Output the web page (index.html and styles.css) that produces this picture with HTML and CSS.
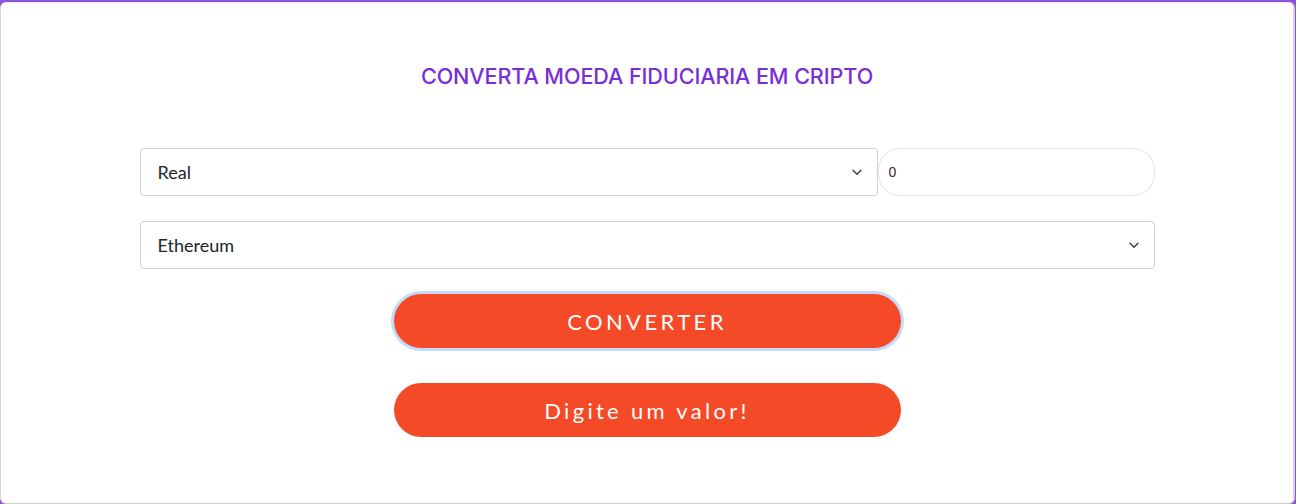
FILE: index.html
```html
<!DOCTYPE html>
<html lang="pt-BR">
<head>
<meta charset="utf-8">
<title>Conversor</title>
<link rel="stylesheet" href="styles.css">
</head>
<body>
<main class="card">
  <h1 class="title">CONVERTA MOEDA FIDUCIARIA EM CRIPTO</h1>
  <form class="form">
    <div class="row">
      <div class="select-wrap select-wrap--fiat">
        <select class="select"><option>Real</option></select>
        <svg class="chevron" viewBox="0 0 16 16" width="14" height="14"><path d="M3.5 6l4.5 4.5L12.5 6" fill="none" stroke="#343a40" stroke-width="1.6" stroke-linecap="round" stroke-linejoin="round"/></svg>
      </div>
      <input class="amount" type="text" value="0">
    </div>
    <div class="row">
      <div class="select-wrap">
        <select class="select"><option>Ethereum</option></select>
        <svg class="chevron" viewBox="0 0 16 16" width="14" height="14"><path d="M3.5 6l4.5 4.5L12.5 6" fill="none" stroke="#343a40" stroke-width="1.6" stroke-linecap="round" stroke-linejoin="round"/></svg>
      </div>
    </div>
    <button type="button" class="btn btn--focus">CONVERTER</button>
    <div class="btn btn--result">Digite um valor!</div>
  </form>
</main>
</body>
</html>
```
FILE: styles.css
```css
* { box-sizing: border-box; }
html, body { margin: 0; padding: 0; }
body {
  background: #8c52da;
  height: 504px;
  overflow: hidden;
  padding-top: 2px;
  font-family: "Lato", "Noto Sans", sans-serif;
}
.card {
  background: #fff;
  height: 502px;
  margin: 0 1px 0 0;
  border-radius: 6px;
  border-left: 1px solid #d6d6d6;
  border-right: 2px solid #d6d6d6;
  border-bottom: 1px solid #cfcfcf;
  border-top: 1px solid #efeaf8;
  display: flex;
  flex-direction: column;
  align-items: center;
}
.title {
  margin: 58px 0 0;
  font-family: "Inter", sans-serif;
  font-weight: 500;
  font-size: 21.6px;
  letter-spacing: -0.1px;
  color: #7a2ed5;
  line-height: 30px;
}
.form {
  width: 1015px;
  margin-top: 57px;
  display: flex;
  flex-direction: column;
  align-items: center;
}
.row {
  width: 100%;
  display: flex;
  margin-bottom: 25px;
}
.select-wrap {
  position: relative;
  flex: 1;
}
.select-wrap--fiat { flex: 0 0 738px; }
.select {
  appearance: none;
  -webkit-appearance: none;
  width: 100%;
  height: 48px;
  border: 1px solid #ced4da;
  border-radius: 4px;
  background: #fff;
  padding: 0 40px 0 17px;
  font-family: "Lato", sans-serif;
  font-size: 18px;
  color: #212529;
  outline: none;
}
.chevron {
  position: absolute;
  right: 14px;
  top: 17px;
}
.amount {
  flex: 1;
  height: 48px;
  border: 1px solid #e2e2e2;
  border-radius: 22px;
  padding: 0 10px;
  font-family: "Liberation Sans", sans-serif;
  font-size: 14px;
  color: #3b2c1e;
  outline: none;
  background: #fff;
}
.btn {
  width: 507px;
  height: 54px;
  border: none;
  border-radius: 27px;
  background: #f44a28;
  color: #fff;
  display: flex;
  align-items: center;
  justify-content: center;
  font-family: "Lato", sans-serif;
  font-size: 22px;
  padding: 0;
}
.btn--focus {
  margin-top: 0;
  letter-spacing: 3.4px;
  box-shadow: 0 0 0 3px #c4dbfb;
}
.btn--result {
  margin-top: 35px;
  letter-spacing: 3.3px;
}
```
